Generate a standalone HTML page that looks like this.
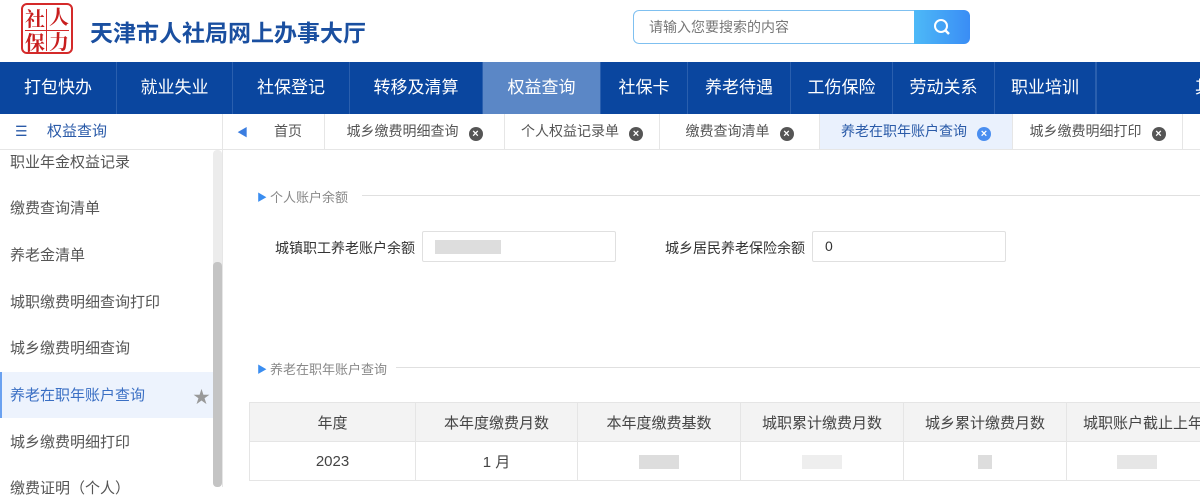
<!DOCTYPE html>
<html><head><meta charset="utf-8"><style>
*{margin:0;padding:0;box-sizing:border-box}
body{width:1200px;height:487px;overflow:hidden;background:#fff;font-family:"Liberation Sans","Noto Sans CJK SC",sans-serif;position:relative;color:#333}
.abs{position:absolute}
.nav{top:62px;left:0;width:1200px;height:52px;background:#0a469f}
.nav div{position:absolute;top:0;height:52px;line-height:52px;text-align:center;color:#fff;font-size:17px;border-right:1px solid #2a5fae}
.tabs{top:114px;left:0;width:1200px;height:36px;border-bottom:1px solid #e6e6e6}
.tab{position:absolute;top:0;height:35px;line-height:35px;font-size:14px;color:#555;border-right:1px solid #e6e6e6;text-align:center}
.x{display:inline-block;width:14px;height:14px;border-radius:50%;background:#555;color:#fff;font-size:11px;line-height:14px;text-align:center;vertical-align:-1px;margin-left:10px;font-weight:bold}
.side div{position:absolute;left:10px;font-size:15px;color:#555}
.sec{font-size:13px;color:#888}
.lab{font-size:14px;color:#333}
.inp{border:1px solid #e0e0e0;border-radius:2px;height:31px;background:#fff}
table{border-collapse:collapse;position:absolute;left:249px;top:402px;width:966px;table-layout:fixed;font-size:15px;color:#444}
td{border:1px solid #e5e5e5;text-align:center;height:39px;white-space:nowrap;overflow:hidden}
tr.h td{background:#f3f3f3}
.blur{display:inline-block;height:14px;background:#ddd;vertical-align:middle}
.lg{position:absolute;font-size:20px;line-height:20px;color:#c81e1e;font-family:"Noto Serif CJK SC",serif;font-weight:bold}
</style></head><body>
<div class="abs" style="left:21px;top:3px;width:52px;height:51px;border:2px solid #d42a2a;border-radius:6px">
<div class="abs" style="left:23px;top:4px;width:1px;height:42px;background:#d42a2a"></div>
<div class="abs" style="left:2px;top:25px;width:44px;height:1px;background:#d42a2a"></div>
<span class="lg" style="left:2px;top:3px">社</span><span class="lg" style="left:26px;top:1px">人</span><span class="lg" style="left:2px;top:27px">保</span><span class="lg" style="left:26px;top:26px">力</span></div>
<div class="abs" style="left:90px;top:14px;font-size:23px;font-weight:bold;color:#1a4fa0">天津市人社局网上办事大厅</div>
<div class="abs" style="left:633px;top:10px;width:282px;height:34px;border:1px solid #7fc0f0;border-radius:6px 0 0 6px;font-size:14px;color:#777;line-height:32px;padding-left:15px">请输入您要搜索的内容</div>
<div class="abs" style="left:914px;top:10px;width:56px;height:34px;border-radius:0 6px 6px 0;background:linear-gradient(90deg,#4db9f7,#3a8df5)">
<svg width="56" height="34"><circle cx="27" cy="16" r="6" fill="none" stroke="#fff" stroke-width="2"/><line x1="31" y1="20" x2="35" y2="24" stroke="#fff" stroke-width="2.5"/></svg></div>
<div class="abs nav">
<div style="left:0;width:117px">打包快办</div><div style="left:117px;width:116px">就业失业</div><div style="left:233px;width:117px">社保登记</div><div style="left:350px;width:133px">转移及清算</div><div style="left:483px;width:118px;background:#5b87c6">权益查询</div><div style="left:601px;width:87px">社保卡</div><div style="left:688px;width:103px">养老待遇</div><div style="left:791px;width:102px">工伤保险</div><div style="left:893px;width:102px">劳动关系</div><div style="left:995px;width:101px">职业培训</div><div style="left:1096px;width:120px;text-align:left;padding-left:98px;border-left:1px solid #2a5fae">其</div>
</div>
<div class="abs tabs">
<div class="abs" style="left:0;top:0;width:223px;height:35px;border-right:1px solid #e6e6e6;line-height:35px;font-size:15px;color:#2a5aa8"><span style="position:absolute;left:15px;color:#2a5aa8;font-size:14px">☰</span><span style="position:absolute;left:47px">权益查询</span></div>
<div class="tab" style="left:224px;width:101px;text-align:left;padding-left:13px"><span style="color:#3a7de0;font-size:11px">◀</span><span style="margin-left:26px">首页</span></div>
<div class="tab" style="left:325px;width:180px">城乡缴费明细查询<span class="x">×</span></div>
<div class="tab" style="left:505px;width:155px">个人权益记录单<span class="x">×</span></div>
<div class="tab" style="left:660px;width:160px">缴费查询清单<span class="x">×</span></div>
<div class="tab" style="left:820px;width:193px;background:#eaf1fd;color:#2a5aa8">养老在职年账户查询<span class="x" style="background:#4a8ef0">×</span></div>
<div class="tab" style="left:1013px;width:170px">城乡缴费明细打印<span class="x">×</span></div>
</div>
<div class="abs side" style="left:0;top:150px;width:223px;height:337px;border-right:1px solid #e6e6e6">
<div style="top:1px">职业年金权益记录</div>
<div style="top:47px">缴费查询清单</div>
<div style="top:94px">养老金清单</div>
<div style="top:141px">城职缴费明细查询打印</div>
<div style="top:187px">城乡缴费明细查询</div>
<div style="left:0;top:222px;width:213px;height:46px;background:#edf3fd;border-left:2px solid #6aa1f0"></div>
<div style="top:234px;color:#3a6fc4">养老在职年账户查询</div>
<div style="left:193px;top:233px;color:#999;font-size:17px">★</div>
<div style="top:281px">城乡缴费明细打印</div>
<div style="top:327px">缴费证明（个人）</div>
<div style="left:213px;top:0;width:9px;height:337px;background:#ececec;border-radius:4px"></div>
<div style="left:213px;top:112px;width:9px;height:225px;background:#c4c4c4;border-radius:4px"></div>
</div>
<div class="abs" style="left:257px;top:189px;color:#3a8df0;font-size:10px">▶</div>
<div class="abs sec" style="left:270px;top:187px">个人账户余额</div>
<div class="abs" style="left:362px;top:195px;width:838px;height:1px;background:#e0e0e0"></div>
<div class="abs lab" style="left:275px;top:238px">城镇职工养老账户余额</div>
<div class="abs inp" style="left:422px;top:231px;width:194px"><span class="blur" style="margin:8px 0 0 12px;width:66px"></span></div>
<div class="abs lab" style="left:665px;top:238px">城乡居民养老保险余额</div>
<div class="abs inp" style="left:812px;top:231px;width:194px;font-size:14px;line-height:29px;padding-left:12px">0</div>
<div class="abs" style="left:257px;top:361px;color:#3a8df0;font-size:10px">▶</div>
<div class="abs sec" style="left:270px;top:359px">养老在职年账户查询</div>
<div class="abs" style="left:396px;top:367px;width:804px;height:1px;background:#e0e0e0"></div>
<table>
<tr class="h"><td style="width:166px">年度</td><td style="width:162px">本年度缴费月数</td><td style="width:163px">本年度缴费基数</td><td style="width:163px">城职累计缴费月数</td><td style="width:163px">城乡累计缴费月数</td><td style="width:149px;text-align:left;padding-left:16px">城职账户截止上年末</td></tr>
<tr><td>2023</td><td>1 月</td><td><span class="blur" style="width:40px"></span></td><td><span class="blur" style="width:40px;background:#eee"></span></td><td><span class="blur" style="width:14px"></span></td><td style="text-align:left;padding-left:50px"><span class="blur" style="width:40px;background:#e6e6e6"></span></td></tr>
</table>
</body></html>
